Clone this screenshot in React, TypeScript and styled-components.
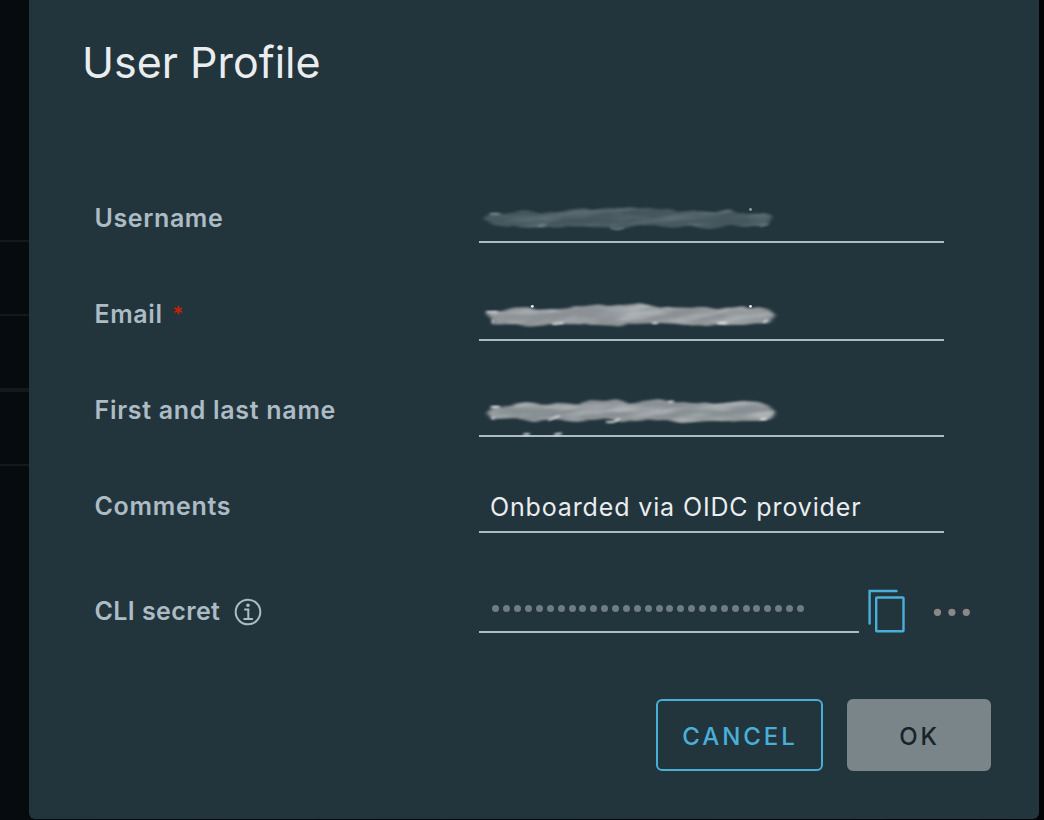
import React from 'react';
import styled, { createGlobalStyle } from 'styled-components';

const GlobalStyle = createGlobalStyle`
  * { box-sizing: border-box; }
  body {
    margin: 0;
    background: #000;
    overflow: hidden;
    font-family: Inter, "Open Sans", sans-serif;
  }
`;

const Backdrop = styled.div`
  height: 820px;
  padding: 0 5px 1px 29px;
  background:
    linear-gradient(#14191c, #14191c) 0 240px / 29px 2px no-repeat,
    linear-gradient(#14191c, #14191c) 0 314px / 29px 2px no-repeat,
    linear-gradient(#14191c, #14191c) 0 388px / 29px 4px no-repeat,
    linear-gradient(#14191c, #14191c) 0 464px / 29px 2px no-repeat,
    linear-gradient(90deg, #050b0f, #060b0c 28px, #020304 100%);
`;

const Dialog = styled.section`
  display: flex;
  flex-direction: column;
  height: 819px;
  padding: 0 48px 48px 54px;
  background: #22343c;
  border-radius: 0 0 6px 6px;
`;

const Title = styled.h1`
  margin: 0 0 0 -1px;
  height: 147px;
  padding-top: 36px;
  font-size: 43px;
  line-height: 52px;
  font-weight: 400;
  letter-spacing: 0;
  color: #eaedf0;
`;

const Form = styled.div`
  display: flex;
  flex-direction: column;
  padding-left: 12px;
`;

const Row = styled.div<{ $height: number }>`
  display: grid;
  grid-template-columns: 384px 465px;
  align-items: end;
  height: ${(p) => p.$height}px;
`;

const Label = styled.label<{ $rise: number; $spacing?: number }>`
  display: flex;
  align-items: center;
  margin: 0 0 ${(p) => p.$rise}px -0.5px;
  font-size: 25px;
  line-height: 36px;
  font-weight: 600;
  letter-spacing: ${(p) => p.$spacing ?? 0.6}px;
  white-space: nowrap;
  color: #adbbc4;
  svg { margin: 2px 0 0 14px; }
`;

const Required = styled.span`
  margin-left: 10px;
  font-size: 20px;
  color: #c92100;
`;

const Field = styled.div<{ $width?: number }>`
  display: flex;
  align-items: center;
  align-self: flex-end;
  width: ${(p) => p.$width ?? 465}px;
  height: 52px;
  padding: 2px 0 0 11px;
  border-bottom: 2px solid #adbbc4;
  font-size: 25px;
  letter-spacing: 0.86px;
  white-space: nowrap;
  color: #eaedf0;
`;

const Smudge = styled.svg`
  margin: -2px 0 0 -11px;
  width: 320px;
  height: 50px;
  flex: none;
  overflow: visible;
`;

const SecretLine = styled.div`
  display: flex;
  width: 512px;
`;

const Mask = styled.div`
  display: flex;
  gap: 3.88px;
  margin: 2px 0 0 2.4px;
`;

const Dot = styled.i`
  width: 7px;
  height: 7px;
  border-radius: 50%;
  background: #6f7d83;
`;

const IconButton = styled.button<{ $left: number }>`
  display: flex;
  margin: 0 0 0 ${(p) => p.$left}px;
  padding: 0;
  border: 0;
  background: none;
`;

const Copy = styled(IconButton)`
  margin-top: 9px;
`;

const More = styled(IconButton)`
  margin-top: 28px;
`;

const Actions = styled.footer`
  display: flex;
  justify-content: flex-end;
  gap: 24px;
  margin-top: auto;
`;

const Button = styled.button<{ $solid?: boolean }>`
  width: ${(p) => (p.$solid ? 144 : 167)}px;
  height: 72px;
  padding: 4px 0 0 1px;
  border: 2px solid ${(p) => (p.$solid ? '#7a858a' : '#49afd9')};
  border-radius: 6px;
  background: ${(p) => (p.$solid ? '#7a858a' : 'transparent')};
  color: ${(p) => (p.$solid ? '#16242a' : '#49afd9')};
  font: 500 24px/30px Inter, sans-serif;
  letter-spacing: 2.9px;
`;

type Stroke = {
  id: string;
  label: string;
  color: string;
  light: string;
  speck: string;
  grain: number;
  dy: number;
  body: string;
  highlights: string;
  specks: [number, number][];
  seed: number;
};

const strokes: Record<string, Stroke> = {
  username: {
    id: 'u', label: 'Username value hidden', color: '#45565d', light: '#74868e', speck: '#8f9fa7', grain: 0.15, dy: 0, seed: 4,
    body: 'M4 28 L11 22 L25 22 L45 19 L55 21 L78 21 L105 18 L112 19 L132 17 L150 16 L164 18 L190 17 L200 21 L238 21 L250 18 L258 22 L286 22 L293 25 L290 31 L284 35 L250 35 L232 38 L212 35 L182 36 L160 34 L142 38 L130 35 L105 36 L88 35 L72 36 L50 37 L35 35 L15 35 L10 31 Z',
    highlights: 'M12 23 H20 M60 35 L66 34 M132 37 Q138 39 144 37 M282 35 L289 33',
    specks: [[271.5, 18.5]],
  },
  email: {
    id: 'e', label: 'Email value hidden', color: '#8b9194', light: '#dfe3e5', speck: '#eef1f3', grain: 0.36, dy: 1, seed: 9,
    body: 'M6 22 L28 19 L49 18 L58 20 L78 19 L98 17 L122 14 L130 16 L160 13 L178 17 L208 17 L227 17 L240 20 L264 16 L270 19 L289 19 L296 25 L290 33 L281 34 L250 34 L228 36 L208 34 L180 33 L155 34 L140 36 L118 35 L95 34 L58 36 L38 35 L15 34 L13 29 Z',
    highlights: 'M8 22 H18 M14 30 V33 M74 34 L84 33 M174 33 H178 M240 33 H247 M285 32 L288 30',
    specks: [[53.3, 16.3], [271.5, 16.3]],
  },
  name: {
    id: 'n', label: 'Name value hidden', color: '#899093', light: '#e1e5e8', speck: '#eef1f3', grain: 0.36, dy: 5, seed: 17,
    body: 'M8 23 L14 17 L33 16 L47 12 L62 15 L82 12 L99 14 L112 10 L126 11 L137 9 L150 14 L181 10 L190 12 L213 13 L238 14 L264 11 L280 12 L290 16 L296 22 L291 28 L282 30 L251 30 L228 31 L202 33 L188 30 L158 31 L142 32 L130 28 L98 32 L75 30 L54 32 L37 28 L13 29 Z',
    highlights: 'M13 17 H20 M14 27 V29 M70 30 L80 26 M128 32 Q135 33 140 29 M190 12 L194 11.5 M45 44.5 L50 44 M76 44.5 L82 43.5 M282 29 H287',
    specks: [],
  },
};

const HiddenValue = ({ stroke }: { stroke: Stroke }) => (
  <Smudge viewBox="0 0 320 50" role="img" aria-label={stroke.label}>
    <defs>
      <filter id={`rough-${stroke.id}`} x="-5%" y="-30%" width="110%" height="160%">
        <feTurbulence type="fractalNoise" baseFrequency="0.045 0.12" numOctaves="2" seed={stroke.seed} result="noise" />
        <feDisplacementMap in="SourceGraphic" in2="noise" scale="5" result="torn" />
        <feGaussianBlur in="torn" stdDeviation="2.4 0.9" />
      </filter>
      <filter id={`grain-${stroke.id}`} x="0" y="0" width="100%" height="100%">
        <feTurbulence type="fractalNoise" baseFrequency="0.022 0.14" numOctaves="3" seed={stroke.seed + 1} />
        <feColorMatrix values="0 0 0 0 0.86  0 0 0 0 0.89  0 0 0 0 0.91  2.4 0 0 0 -0.95" />
        <feComposite in2="SourceGraphic" operator="in" />
        <feGaussianBlur stdDeviation="1.2 0.5" />
      </filter>
      <filter id={`soft-${stroke.id}`} x="-5%" y="-30%" width="110%" height="160%">
        <feGaussianBlur stdDeviation="1.8 0.8" />
      </filter>
      <clipPath id={`clip-${stroke.id}`}><path d={stroke.body} /></clipPath>
    </defs>
    <g transform={`translate(0 ${stroke.dy})`}>
      <path d={stroke.body} fill={stroke.color} filter={`url(#rough-${stroke.id})`} />
      <g filter={`url(#soft-${stroke.id})`}>
        <g clipPath={`url(#clip-${stroke.id})`}>
          <g transform="rotate(-6 150 25)">
            <rect x="-5" y="-10" width="315" height="70" fill="#fff" opacity={stroke.grain} filter={`url(#grain-${stroke.id})`} />
          </g>
        </g>
      </g>
      <path d={stroke.highlights} fill="none" stroke={stroke.light} strokeWidth="1.8" strokeLinecap="round" filter={`url(#soft-${stroke.id})`} />
      {stroke.specks.map(([x, y]) => (
        <circle key={x} cx={x} cy={y} r="1.4" fill={stroke.speck} />
      ))}
    </g>
  </Smudge>
);

const InfoIcon = () => (
  <svg width="28" height="28" viewBox="0 0 28 28" fill="none" stroke="#adbbc4" strokeWidth="2">
    <circle cx="14" cy="14" r="12.3" />
    <circle cx="14" cy="7.3" r="1.8" fill="#adbbc4" stroke="none" />
    <path d="M11 11.5h3.3v9.2M10.2 21h8" strokeLinecap="round" />
  </svg>
);

const CopyIcon = () => (
  <svg width="38" height="44" viewBox="0 0 38 44" fill="none" stroke="#49afd9" strokeWidth="2.4" strokeLinecap="round">
    <path d="M2.6 34.5V2H29.5" />
    <rect x="9.2" y="8.5" width="27.3" height="33.8" rx="0.7" />
  </svg>
);

const MoreIcon = () => (
  <svg width="38" height="8" viewBox="0 0 38 8" fill="#8b8988">
    <circle cx="4.5" cy="4.3" r="3.6" />
    <circle cx="18.9" cy="4.3" r="3.6" />
    <circle cx="33.3" cy="4.3" r="3.6" />
  </svg>
);

export default function App() {
  return (
    <>
      <GlobalStyle />
      <Backdrop>
        <Dialog role="dialog" aria-label="User Profile">
          <Title>User Profile</Title>
          <Form>
            <Row $height={96}>
              <Label $rise={7}>Username</Label>
              <Field><HiddenValue stroke={strokes.username} /></Field>
            </Row>
            <Row $height={98}>
              <Label $rise={9}>Email<Required>*</Required></Label>
              <Field><HiddenValue stroke={strokes.email} /></Field>
            </Row>
            <Row $height={96}>
              <Label $rise={9} $spacing={0.7}>First and last name</Label>
              <Field><HiddenValue stroke={strokes.name} /></Field>
            </Row>
            <Row $height={96}>
              <Label $rise={9} $spacing={0.7}>Comments</Label>
              <Field>Onboarded via OIDC provider</Field>
            </Row>
            <Row $height={100}>
              <Label $rise={4} $spacing={0.4}>CLI secret<InfoIcon /></Label>
              <SecretLine>
                <Field $width={380}>
                  <Mask>{Array.from({ length: 29 }, (_, i) => <Dot key={i} />)}</Mask>
                </Field>
                <Copy $left={8} aria-label="Copy"><CopyIcon /></Copy>
                <More $left={28} aria-label="More"><MoreIcon /></More>
              </SecretLine>
            </Row>
          </Form>
          <Actions>
            <Button>CANCEL</Button>
            <Button $solid>OK</Button>
          </Actions>
        </Dialog>
      </Backdrop>
    </>
  );
}
